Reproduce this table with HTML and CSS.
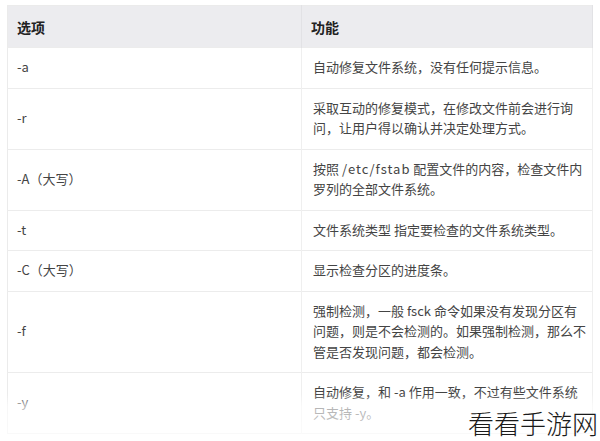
FILE: index.html
```html
<!DOCTYPE html>
<html lang="zh">
<head>
  <meta charset="UTF-8">
  <meta name="viewport" content="width=device-width, initial-scale=1.0">
  <title>fsck 选项</title>
  <link rel="stylesheet" href="styles.css">
</head>
<body>

  <!-- fsck options table -->
  <div class="table-wrap">
    <table class="opt-table">
      <thead>
        <tr>
          <th class="col-opt">选项</th>
          <th>功能</th>
        </tr>
      </thead>
      <tbody>
        <tr>
          <td>-a</td>
          <td>自动修复文件系统，没有任何提示信息。</td>
        </tr>
        <tr>
          <td>-r</td>
          <td>采取互动的修复模式，在修改文件前会进行询问，让用户得以确认并决定处理方式。</td>
        </tr>
        <tr>
          <td>-A（大写）</td>
          <td>按照 <span class="path">/etc/fstab</span> 配置文件的内容，检查文件内罗列的全部文件系统。</td>
        </tr>
        <tr>
          <td>-t</td>
          <td>文件系统类型 指定要检查的文件系统类型。</td>
        </tr>
        <tr>
          <td>-C（大写）</td>
          <td>显示检查分区的进度条。</td>
        </tr>
        <tr>
          <td>-f</td>
          <td>强制检测，一般 fsck 命令如果没有发现分区有问题，则是不会检测的。如果强制检测，那么不管是否发现问题，都会检测。</td>
        </tr>
        <tr>
          <td>-y</td>
          <td>自动修复，和 -a 作用一致，不过有些文件系统只支持 -y。</td>
        </tr>
      </tbody>
    </table>
    <div class="fade"></div>
  </div>

  <div class="watermark">看看手游网</div>

</body>
</html>
```

FILE: styles.css
```css
body {
  font-family: "Noto Sans CJK SC", "Noto Sans", sans-serif;
  margin: 0;
  padding: 5px 7px 0;
  background-color: white;
  color: #444;
  overflow: hidden;
}

.table-wrap {
  position: relative;
  width: 586px;
}

.opt-table {
  width: 100%;
  border-collapse: collapse;
  border: 1px solid #ebebeb;
  table-layout: fixed;
  font-size: 13px;
}

.opt-table th {
  background-color: #ececef;
  color: #222;
  font-weight: 600;
  font-size: 14px;
  text-align: left;
  height: 42px;
  padding: 0 9px;
  border-right: 1px solid #e2e2e5;
  box-sizing: border-box;
}

.opt-table th.col-opt {
  width: 294px;
}

.opt-table td {
  padding: 9px 6px 10px 9px;
  line-height: 20.5px;
  vertical-align: middle;
  border-top: 1px solid #ececec;
  border-right: 1px solid #efefef;
}

.opt-table td + td {
  padding-left: 11px;
}

.path {
  letter-spacing: 1px;
}

.fade {
  position: absolute;
  left: 0;
  right: 0;
  bottom: 0;
  height: 40px;
  background: linear-gradient(rgba(255,255,255,0), rgba(255,255,255,0.6) 30%, rgba(255,255,255,0.7));
}

.watermark {
  position: absolute;
  right: 2px;
  bottom: 3px;
  font-size: 26px;
  font-weight: 300;
  color: #1a1a1a;
  line-height: 30px;
}
```
